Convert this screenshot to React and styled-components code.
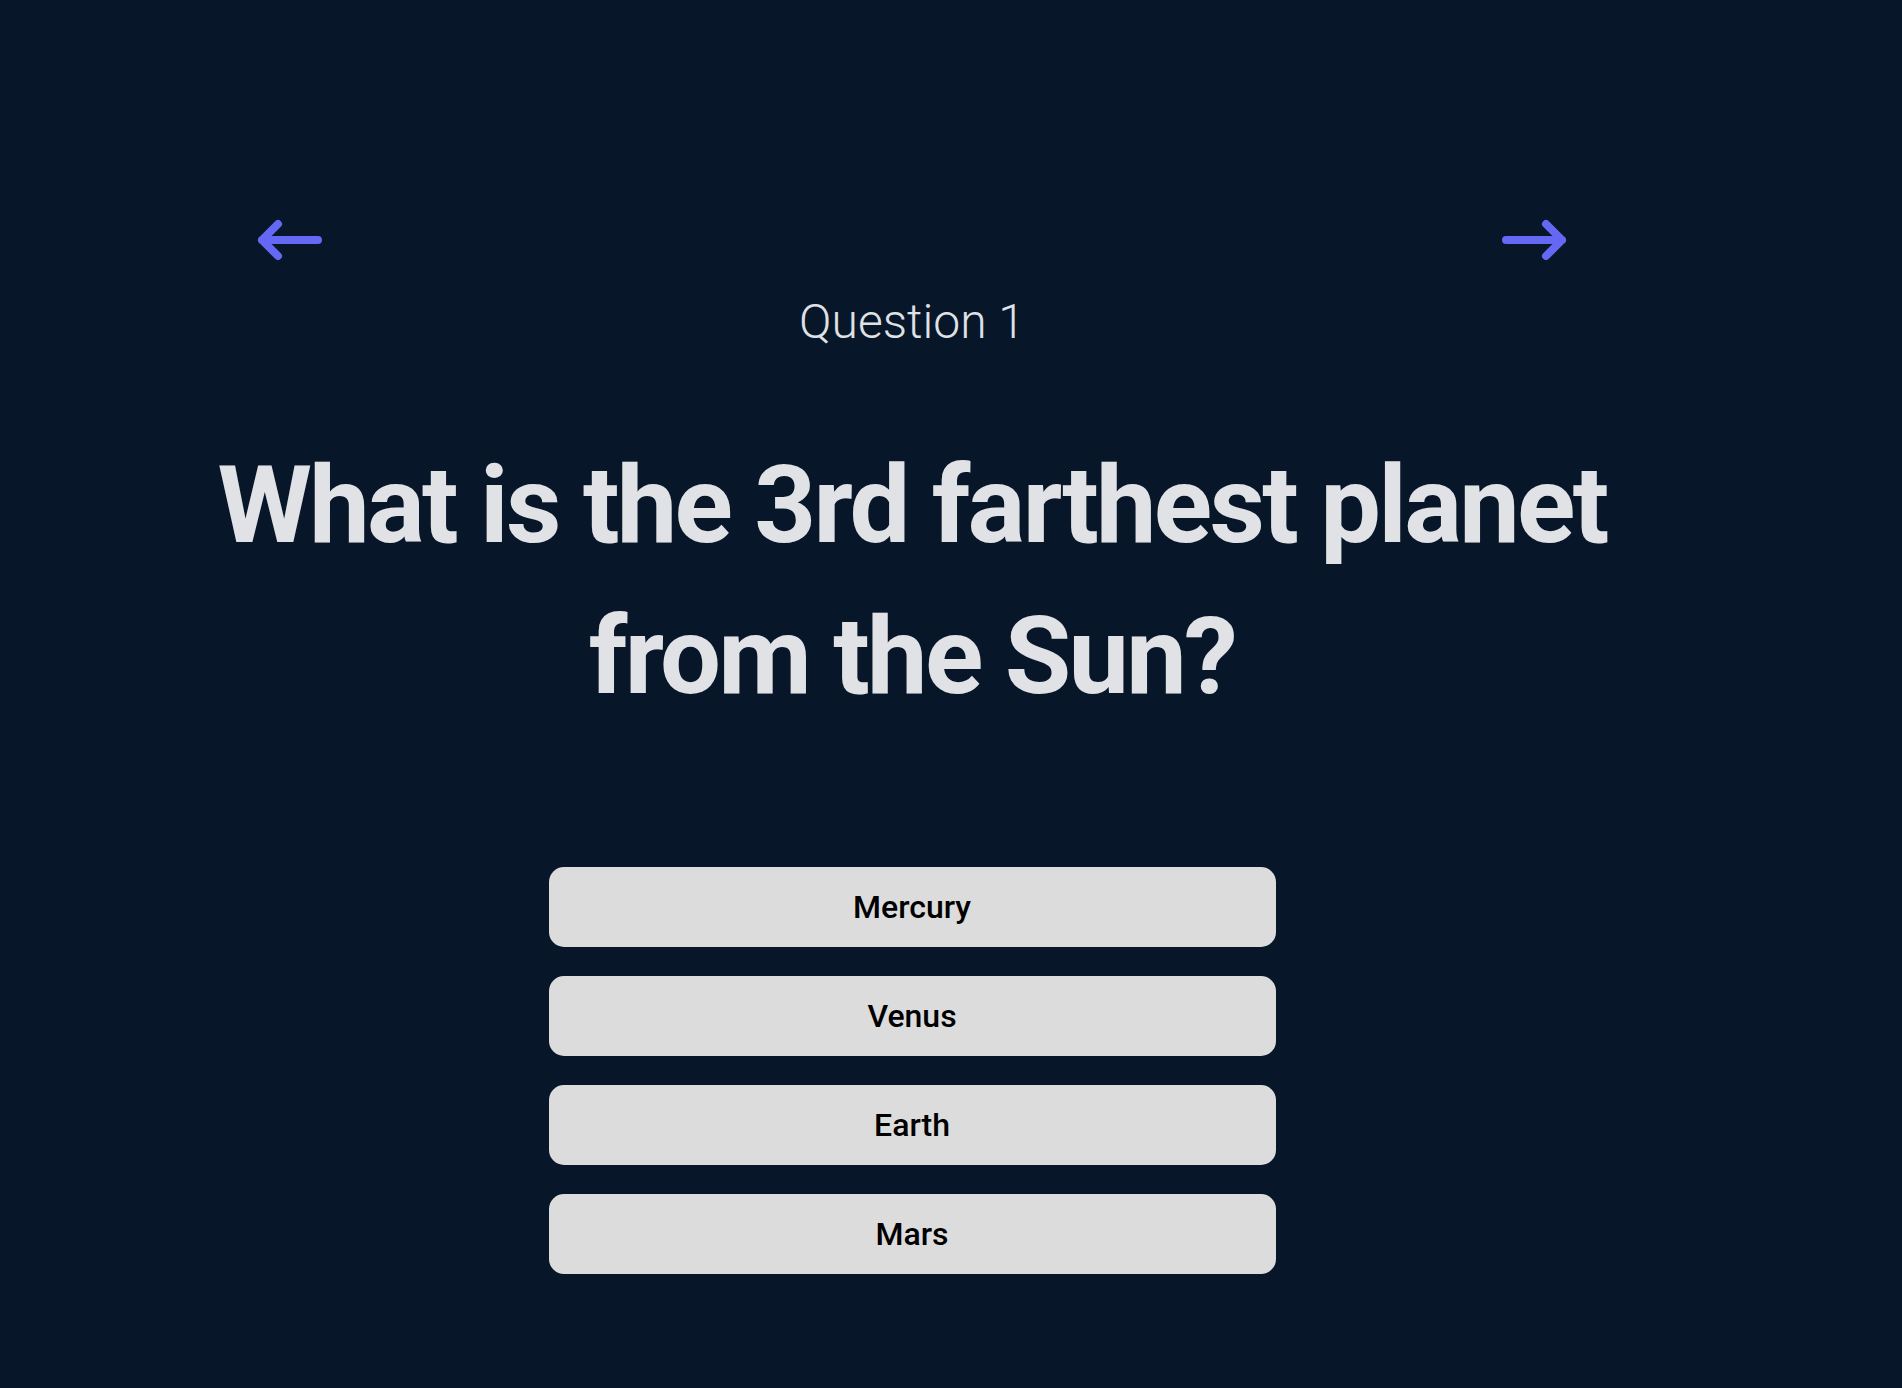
import React from "react";
import styled, { createGlobalStyle } from "styled-components";

const GlobalStyle = createGlobalStyle`
  html, body {
    margin: 0;
    padding: 0;
    background: #071628;
  }
  body {
    font-family: Roboto, "Liberation Sans", sans-serif;
  }
`;

const answers = ["Mercury", "Venus", "Earth", "Mars"];

function Arrow({ dir }) {
  const d =
    dir === "left"
      ? "M8 24H64M24 8L8 24L24 40"
      : "M8 24H64M48 8L64 24L48 40";
  return (
    <ArrowButton aria-label={dir === "left" ? "Previous" : "Next"}>
      <svg width="72" height="48" viewBox="0 0 72 48" fill="none">
        <path
          d={d}
          stroke="#6468f2"
          strokeWidth="8"
          strokeLinecap="round"
          strokeLinejoin="round"
        />
      </svg>
    </ArrowButton>
  );
}

export default function App() {
  return (
    <>
      <GlobalStyle />
      <Page>
        <Column>
          <Navigation>
            <Arrow dir="left" />
            <Arrow dir="right" />
          </Navigation>
          <QuestionLabel>Question 1</QuestionLabel>
          <Headline>What is the 3rd farthest planet from the Sun?</Headline>
          <Answers>
            {answers.map((a) => (
              <Answer key={a}>{a}</Answer>
            ))}
          </Answers>
        </Column>
      </Page>
    </>
  );
}

const Page = styled.main`
  min-height: 1388px;
  width: 100%;
  background: #071628;
  box-sizing: border-box;
  padding: 216px 332px 0 254px;
`;

const Column = styled.div`
  display: flex;
  flex-direction: column;
  align-items: center;
`;

const Navigation = styled.nav`
  width: 100%;
  display: flex;
  justify-content: space-between;
  align-items: center;
`;

const ArrowButton = styled.button`
  background: none;
  border: none;
  padding: 0;
  display: flex;
  cursor: pointer;
`;

const QuestionLabel = styled.h2`
  margin: 29px 0 0;
  font-size: 48px;
  line-height: 58px;
  font-weight: 300;
  color: #dfe1e5;
`;

const Headline = styled.h1`
  margin: 79px -70px 0;
  align-self: stretch;
  text-align: center;
  font-size: 108px;
  line-height: 1.4;
  font-weight: 700;
  letter-spacing: -2.7px;
  color: #e0e2e5;
`;

const Answers = styled.div`
  margin-top: 135px;
  width: 727px;
  display: flex;
  flex-direction: column;
  gap: 29px;
`;

const Answer = styled.button`
  height: 80px;
  width: 100%;
  border: none;
  border-radius: 15px;
  background: #dcdcdc;
  color: #000;
  font-family: Roboto, "Liberation Sans", sans-serif;
  font-size: 32px;
  font-weight: 500;
  cursor: pointer;
`;
